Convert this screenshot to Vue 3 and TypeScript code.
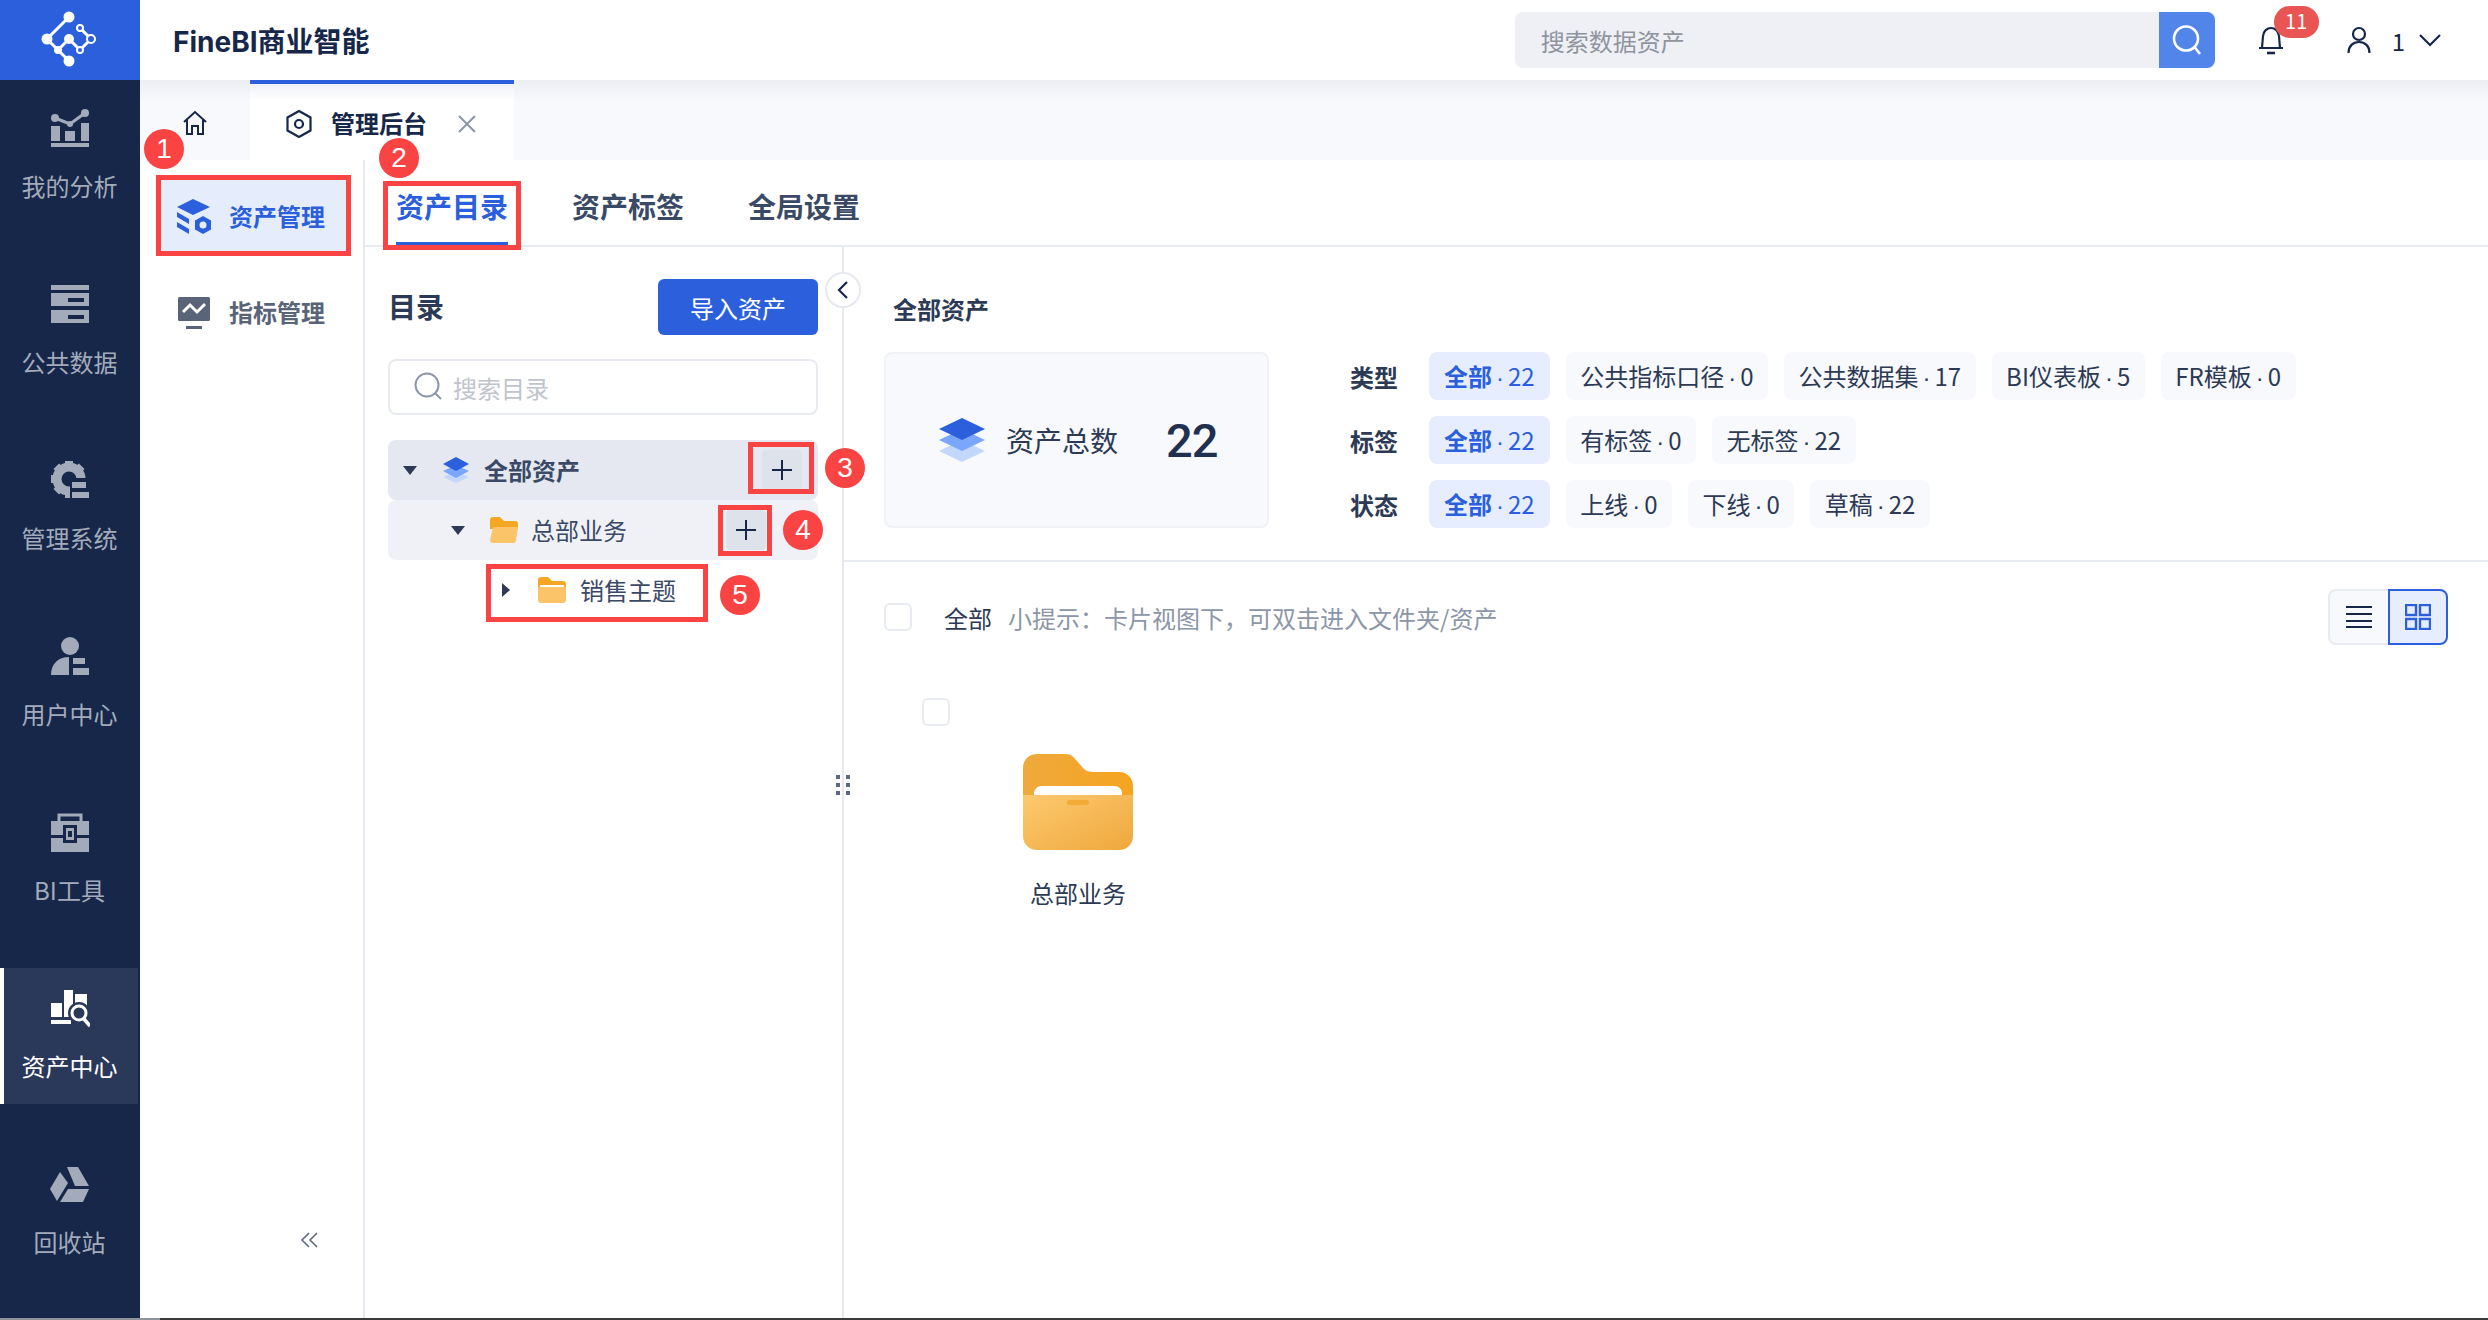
<script setup lang="ts">
interface Chip { text: string; count: string; active?: boolean }
interface FilterRow { label: string; chips: Chip[] }

const navItems = [
  { key: 'analysis', label: '我的分析' },
  { key: 'data', label: '公共数据' },
  { key: 'system', label: '管理系统' },
  { key: 'user', label: '用户中心' },
  { key: 'tools', label: 'BI工具' },
  { key: 'asset', label: '资产中心', active: true },
  { key: 'trash', label: '回收站' },
]

const filters: FilterRow[] = [
  { label: '类型', chips: [
    { text: '全部', count: '22', active: true },
    { text: '公共指标口径', count: '0' },
    { text: '公共数据集', count: '17' },
    { text: 'BI仪表板', count: '5' },
    { text: 'FR模板', count: '0' },
  ] },
  { label: '标签', chips: [
    { text: '全部', count: '22', active: true },
    { text: '有标签', count: '0' },
    { text: '无标签', count: '22' },
  ] },
  { label: '状态', chips: [
    { text: '全部', count: '22', active: true },
    { text: '上线', count: '0' },
    { text: '下线', count: '0' },
    { text: '草稿', count: '22' },
  ] },
]

const marks = [1, 2, 3, 4, 5]
</script>

<template>
  <div class="root">
    <aside class="rail">
      <div class="logo">
        <svg width="80" height="80" viewBox="30 0 80 80" fill="none">
          <path d="M69 17L47 39L58 50L69 61M58 50L69 39L80 50L91 39L80 28" stroke="#fff" stroke-width="3" />
          <circle cx="69" cy="17" r="5.5" fill="#fff" />
          <circle cx="47" cy="39" r="5.5" fill="#fff" />
          <circle cx="69" cy="39" r="5" fill="#fff" />
          <circle cx="58" cy="50" r="4" fill="#fff" />
          <circle cx="69" cy="61" r="5.5" fill="#fff" />
          <circle cx="80" cy="28" r="3" fill="#2c5fdc" stroke="#fff" stroke-width="2" />
          <circle cx="91" cy="39" r="4" fill="#2c5fdc" stroke="#fff" stroke-width="2" />
          <circle cx="80" cy="50" r="3" fill="#2c5fdc" stroke="#fff" stroke-width="2" />
        </svg>
      </div>
      <nav class="rail-nav">
        <div v-for="n in navItems" :key="n.key" class="rail-item" :class="{ on: n.active }">
          <svg class="rail-icon" width="40" height="40" viewBox="0 0 40 40">
            <template v-if="n.key === 'analysis'">
              <path d="M5 10L20 16L35 5" fill="none" stroke="currentColor" stroke-width="3" />
              <circle cx="5" cy="10" r="4" fill="currentColor" />
              <circle cx="20" cy="16" r="3" fill="currentColor" />
              <circle cx="35" cy="5" r="4" fill="currentColor" />
              <rect x="1" y="18" width="9" height="15" fill="currentColor" />
              <rect x="15" y="23" width="10" height="10" fill="currentColor" />
              <rect x="31" y="15" width="8" height="18" fill="currentColor" />
              <rect x="1" y="35" width="38" height="4" fill="currentColor" />
            </template>
            <template v-else-if="n.key === 'data'">
              <rect x="1" y="1" width="38" height="5" fill="currentColor" />
              <path d="M1 9H39V22H1ZM18 14V18H34V14Z" fill="currentColor" fill-rule="evenodd" />
              <path d="M1 26H39V39H1ZM18 31V35H34V31Z" fill="currentColor" fill-rule="evenodd" />
            </template>
            <template v-else-if="n.key === 'system'">
              <circle cx="19" cy="19" r="12" fill="none" stroke="currentColor" stroke-width="9" />
              <g fill="currentColor">
                <rect x="15" y="1" width="8" height="6" />
                <rect x="15" y="31" width="8" height="7" />
                <rect x="1" y="15" width="6" height="8" />
                <rect x="15" y="1" width="8" height="6" transform="rotate(45 19 19)" />
                <rect x="15" y="1" width="8" height="6" transform="rotate(-45 19 19)" />
                <rect x="15" y="1" width="8" height="6" transform="rotate(-135 19 19)" />
                <rect x="15" y="1" width="8" height="6" transform="rotate(135 19 19)" />
              </g>
              <rect x="20" y="18" width="20" height="22" fill="#16274a" />
              <rect x="22" y="22" width="14" height="6" fill="currentColor" />
              <rect x="22" y="32" width="17" height="6" fill="currentColor" />
            </template>
            <template v-else-if="n.key === 'user'">
              <circle cx="20" cy="10" r="9" fill="currentColor" />
              <path d="M1 39C1 28 8 21 19 21V39Z" fill="currentColor" />
              <rect x="23" y="22" width="12" height="6" fill="currentColor" />
              <rect x="23" y="32" width="16" height="7" fill="currentColor" />
            </template>
            <template v-else-if="n.key === 'tools'">
              <path d="M9 9V3H31V9" fill="none" stroke="currentColor" stroke-width="3" />
              <rect x="1" y="9" width="38" height="14" fill="currentColor" />
              <rect x="1" y="26" width="38" height="14" fill="currentColor" />
              <rect x="13" y="13" width="14" height="18" fill="#16274a" />
              <rect x="16" y="16" width="8" height="12" fill="currentColor" />
              <rect x="18" y="19" width="4" height="6" fill="#16274a" />
            </template>
            <template v-else-if="n.key === 'asset'">
              <rect x="1" y="15" width="11" height="14" fill="currentColor" />
              <rect x="14" y="2" width="9" height="27" fill="currentColor" />
              <rect x="25" y="6" width="12" height="14" fill="currentColor" />
              <rect x="1" y="32" width="20" height="4" fill="currentColor" />
              <circle cx="29" cy="25" r="8" fill="none" stroke="#2a3859" stroke-width="6" />
              <circle cx="29" cy="25" r="7" fill="#2a3859" stroke="currentColor" stroke-width="3" />
              <path d="M34 31L40 38" stroke="currentColor" stroke-width="3.5" />
            </template>
            <template v-else>
              <path d="M17 3H28L39 22H25Z" fill="currentColor" />
              <path d="M0 25L10 8L18 19L7 37Z" fill="currentColor" />
              <path d="M10 38L18 25H39L33 38Z" fill="currentColor" />
            </template>
          </svg>
          <span class="rail-label">{{ n.label }}</span>
        </div>
      </nav>
    </aside>

    <div class="main">
      <header class="topbar">
        <div class="brand">FineBI商业智能</div>
        <div class="top-search">
          <span class="top-search-text">搜索数据资产</span>
          <span class="top-search-btn">
            <svg width="32" height="32" viewBox="0 0 32 32" fill="none" stroke="#fff" stroke-width="2.6">
              <circle cx="15" cy="14.5" r="12" />
              <path d="M23.5 23L29 30" />
            </svg>
          </span>
        </div>
        <div class="bell">
          <svg width="28" height="30" viewBox="0 0 28 30" fill="none" stroke="#16274a" stroke-width="2.2">
            <path d="M2 23H26M5 23L6 11C6.5 6 10 3 14 3S21.5 6 22 11L23 23" />
            <path d="M10 28H18" stroke-width="2.6" />
          </svg>
          <span class="badge">11</span>
        </div>
        <div class="user">
          <svg width="24" height="28" viewBox="0 0 24 28" fill="none" stroke="#16274a" stroke-width="2.2">
            <circle cx="12" cy="8" r="6" />
            <path d="M1.5 27C1.5 20 6 16 12 16S22.5 20 22.5 27" />
          </svg>
          <span class="user-name">1</span>
          <svg width="24" height="14" viewBox="0 0 24 14" fill="none" stroke="#16274a" stroke-width="2.2">
            <path d="M2 2L12 12L22 2" />
          </svg>
        </div>
      </header>

      <div class="tabbar">
        <div class="home-tab">
          <svg width="26" height="26" viewBox="0 0 26 26" fill="none" stroke="#16274a" stroke-width="2">
            <path d="M2 12L13 2L24 12M5 10V24H10V16H16V24H21V10" />
          </svg>
        </div>
        <div class="page-tab">
          <svg width="26" height="30" viewBox="0 0 26 30" fill="none" stroke="#16274a" stroke-width="2.2">
            <path d="M13 2L24.5 8.5V21.5L13 28L1.5 21.5V8.5Z" />
            <circle cx="13" cy="15" r="4" />
          </svg>
          <span class="page-tab-text">管理后台</span>
          <svg class="page-tab-close" width="20" height="20" viewBox="0 0 20 20" fill="none" stroke="#8c96a8" stroke-width="2">
            <path d="M2 2L18 18M18 2L2 18" />
          </svg>
        </div>
      </div>

      <div class="workspace">
        <aside class="subnav">
          <div class="sub-item on">
            <svg width="36" height="36" viewBox="0 0 36 36">
              <path d="M17 0L34 8L17 16L1 8Z" fill="#2c5fdc" />
              <path d="M1 13L13 20V25L1 18ZM1 23L13 30V35L1 28Z" fill="#2c5fdc" />
              <path d="M27 17L35 21.5V30.5L27 35L19 30.5V21.5Z" fill="#2c5fdc" />
              <circle cx="27" cy="26" r="3.5" fill="#e5edfd" />
            </svg>
            <span>资产管理</span>
          </div>
          <div class="sub-item">
            <svg width="36" height="36" viewBox="0 0 36 36">
              <rect x="2" y="2" width="32" height="24" rx="1.5" fill="#5a6478" />
              <path d="M7 17L14 10L21 17L29 9" fill="none" stroke="#fff" stroke-width="3" />
              <rect x="10" y="31" width="16" height="3" fill="#5a6478" />
            </svg>
            <span>指标管理</span>
          </div>
          <div class="sub-collapse">
            <svg width="18" height="16" viewBox="0 0 18 16" fill="none" stroke="#5d6b82" stroke-width="1.6">
              <path d="M9 1L2 8L9 15M17 1L10 8L17 15" />
            </svg>
          </div>
        </aside>

        <section class="content">
          <div class="tabs">
            <div class="tab on">资产目录</div>
            <div class="tab">资产标签</div>
            <div class="tab">全局设置</div>
          </div>

          <div class="panes">
            <div class="tree-pane">
              <div class="collapse-btn">
                <svg width="14" height="20" viewBox="0 0 14 20" fill="none" stroke="#16274a" stroke-width="2.2">
                  <path d="M11 2L3 10L11 18" />
                </svg>
              </div>
              <div class="drag-handle"><i /><i /><i /><i /><i /><i /></div>

              <div class="tree-head">
                <span class="tree-title">目录</span>
                <button class="import-btn">导入资产</button>
              </div>
              <div class="tree-search">
                <svg width="30" height="30" viewBox="0 0 30 30" fill="none" stroke="#8c96a8" stroke-width="2">
                  <circle cx="13" cy="13" r="11.5" />
                  <path d="M21.5 21.5L27 27" />
                </svg>
                <span>搜索目录</span>
              </div>

              <div class="tree">
                <div class="tree-row lvl0">
                  <span class="caret down" />
                  <svg width="26" height="26" viewBox="0 0 26 26">
                    <path d="M13 15L26 20L13 26L0 20Z" fill="#c3d7fd" />
                    <path d="M13 8L26 14L13 21L0 14Z" fill="#7aa6fb" />
                    <path d="M13 0L26 7L13 14L0 7Z" fill="#2c5fdc" />
                  </svg>
                  <span class="tree-text strong">全部资产</span>
                  <span class="tree-add">
                    <svg width="22" height="22" viewBox="0 0 22 22" stroke="#16274a" stroke-width="2"><path d="M11 1V21M1 11H21" /></svg>
                  </span>
                </div>
                <div class="tree-row lvl1">
                  <span class="caret down" />
                  <svg width="28" height="26" viewBox="0 0 28 26">
                    <path d="M0 3C0 1 1 0 3 0H10L14 4H25C27 4 28 5 28 7V12H0Z" fill="#f5a623" />
                    <path d="M3 10H28L26 23C26 25 25 26 23 26H3C1 26 0 25 0 23Z" fill="#fbc468" />
                  </svg>
                  <span class="tree-text">总部业务</span>
                  <span class="tree-add">
                    <svg width="22" height="22" viewBox="0 0 22 22" stroke="#16274a" stroke-width="2"><path d="M11 1V21M1 11H21" /></svg>
                  </span>
                </div>
                <div class="tree-row lvl2">
                  <span class="caret right" />
                  <svg width="28" height="26" viewBox="0 0 28 26">
                    <path d="M0 3C0 1 1 0 3 0H10L14 4H25C27 4 28 5 28 7V12H0Z" fill="#f5a623" />
                    <rect x="2" y="8" width="24" height="3" fill="#fff" />
                    <path d="M0 10H28V23C28 25 27 26 25 26H3C1 26 0 25 0 23Z" fill="#fbc468" />
                  </svg>
                  <span class="tree-text">销售主题</span>
                </div>
              </div>
            </div>

            <div class="detail">
              <div class="detail-top">
                <div class="detail-title">全部资产</div>
                <div class="summary">
                  <div class="total-card">
                    <svg width="46" height="44" viewBox="0 0 46 44">
                      <path d="M23 22L46 33L23 44L0 33Z" fill="#c3d7fd" />
                      <path d="M23 11L46 22L23 33L0 22Z" fill="#7aa6fb" />
                      <path d="M23 0L46 11L23 22L0 11Z" fill="#2c5fdc" />
                    </svg>
                    <span class="total-label">资产总数</span>
                    <span class="total-num">22</span>
                  </div>
                  <div class="filters">
                    <div v-for="row in filters" :key="row.label" class="filter-row">
                      <span class="filter-label">{{ row.label }}</span>
                      <span v-for="c in row.chips" :key="c.text" class="chip" :class="{ on: c.active }">
                        <b v-if="c.active">{{ c.text }}</b><template v-else>{{ c.text }}</template><span class="dot">·</span>{{ c.count }}
                      </span>
                    </div>
                  </div>
                </div>
              </div>

              <div class="toolbar">
                <span class="check" />
                <span class="all-text">全部</span>
                <span class="hint">小提示：卡片视图下，可双击进入文件夹/资产</span>
                <div class="view-toggle">
                  <span class="view-btn">
                    <svg width="26" height="22" viewBox="0 0 26 22" stroke="#16274a" stroke-width="2"><path d="M0 1H26M0 8H26M0 15H26M0 21H26" /></svg>
                  </span>
                  <span class="view-btn on">
                    <svg width="26" height="26" viewBox="0 0 26 26" fill="none" stroke="#2c5fdc" stroke-width="2.4">
                      <rect x="1" y="1" width="10" height="10" />
                      <rect x="15" y="1" width="10" height="10" />
                      <rect x="1" y="15" width="10" height="10" />
                      <rect x="15" y="15" width="10" height="10" />
                    </svg>
                  </span>
                </div>
              </div>

              <div class="asset-card">
                <span class="check" />
                <svg class="asset-folder" width="110" height="96" viewBox="0 0 110 96">
                  <defs>
                    <linearGradient id="bigBack" x1="0" y1="0" x2="1" y2="0">
                      <stop offset="0" stop-color="#efa93d" />
                      <stop offset="1" stop-color="#f6a41f" />
                    </linearGradient>
                    <linearGradient id="bigFront" x1="0" y1="0" x2="1" y2="1">
                      <stop offset="0" stop-color="#fdc96f" />
                      <stop offset="1" stop-color="#efa83c" />
                    </linearGradient>
                  </defs>
                  <path d="M0 14C0 6 6 0 14 0H42C47 0 50 2 53 6L60 14C63 17 66 18 70 18H96C104 18 110 24 110 32V50H0Z" fill="url(#bigBack)" />
                  <path d="M11 40C11 35 14 32 19 32H91C96 32 99 35 99 40V50H11Z" fill="#fff" />
                  <path d="M0 41H110V82C110 90 104 96 96 96H14C6 96 0 90 0 82Z" fill="url(#bigFront)" />
                  <rect x="44" y="46" width="22" height="5" rx="2.5" fill="#f3ab36" />
                </svg>
                <span class="asset-name">总部业务</span>
              </div>
            </div>
          </div>
        </section>
      </div>
    </div>

    <div class="red-box box1" />
    <div class="red-box box2" />
    <div class="red-box box3" />
    <div class="red-box box4" />
    <div class="red-box box5" />
    <span v-for="m in marks" :key="m" class="mark" :class="'mark' + m">{{ m }}</span>
    <div class="bottom-line" />
  </div>
</template>

<style scoped>
* {
  box-sizing: border-box;
}

.root {
  position: relative;
  display: flex;
  width: 100vw;
  height: 100vh;
  overflow: hidden;
  background: #fff;
  color: #2c3a55;
  font-family: "Noto Sans CJK SC", "Noto Sans", sans-serif;
  font-size: 24px;
}

.rail {
  flex: 0 0 140px;
  background: #16274a;
  display: flex;
  flex-direction: column;
}

.logo {
  height: 80px;
  background: #2c5fdc;
  flex: none;
}

.logo svg {
  display: block;
  margin-left: 30px;
}

.rail-nav {
  display: flex;
  flex-direction: column;
  gap: 40px;
  padding-top: 8px;
}

.rail-item {
  height: 136px;
  width: 138px;
  padding-top: 20px;
  display: flex;
  flex-direction: column;
  align-items: center;
  color: #a3abba;
}

.rail-item.on {
  background: #2a3859;
  border-left: 4px solid #fff;
  color: #fff;
}

.rail-item .rail-icon {
  margin-left: 2px;
}

.rail-item.on .rail-icon {
  margin-left: -2px;
}

.rail-label {
  margin-top: 22px;
  margin-left: 1px;
  line-height: 32px;
  font-size: 24px;
  white-space: nowrap;
}

.rail-item.on .rail-label {
  margin-left: -3px;
}

.main {
  flex: 1;
  min-width: 0;
  display: flex;
  flex-direction: column;
}

.topbar {
  position: relative;
  z-index: 2;
  flex: 0 0 80px;
  display: flex;
  align-items: center;
  padding-left: 33px;
  background: #fff;
}

.brand {
  font-size: 28px;
  font-weight: 700;
  color: #16274a;
  font-family: "Inter", "Noto Sans CJK SC", sans-serif;
  letter-spacing: 0;
}

.top-search {
  margin-left: auto;
  width: 700px;
  height: 56px;
  display: flex;
  align-items: center;
  justify-content: space-between;
  background: #eef0f5;
  border-radius: 8px;
  overflow: hidden;
  padding-left: 26px;
}

.top-search-text {
  color: #8f949e;
}

.top-search-btn {
  width: 56px;
  height: 56px;
  background: #5285ea;
  display: flex;
  align-items: center;
  justify-content: center;
}

.bell {
  position: relative;
  margin-left: 42px;
  width: 28px;
  height: 30px;
}

.bell svg {
  display: block;
}

.badge {
  position: absolute;
  left: 17px;
  top: -19px;
  width: 45px;
  height: 32px;
  border-radius: 16px;
  background: #e85552;
  color: #fff;
  font-size: 20px;
  line-height: 30px;
  text-align: center;
}

.user {
  display: flex;
  align-items: center;
  margin-left: 62px;
  margin-right: 46px;
}

.user-name {
  margin-left: 21px;
  margin-right: 13px;
  color: #16274a;
}

.tabbar {
  flex: 0 0 80px;
  display: flex;
  background: linear-gradient(#eceef4, #f8f9fd 22px);
}

.home-tab {
  width: 110px;
  display: flex;
  justify-content: center;
  padding-top: 30px;
}

.home-tab svg {
  display: block;
}

.page-tab {
  width: 264px;
  border-top: 4px solid #2c5fdc;
  background: linear-gradient(#eef1f8, #fff 16px);
  display: flex;
  align-items: center;
  padding-left: 36px;
  padding-top: 3px;
}

.page-tab-text {
  margin-left: 19px;
  font-weight: 700;
  color: #16274a;
  padding-bottom: 2px;
}

.page-tab-close {
  margin-left: 30px;
}

.workspace {
  flex: 1;
  min-height: 0;
  display: flex;
}

.subnav {
  flex: 0 0 225px;
  border-right: 2px solid #e6e9f0;
  padding: 19px 16px 0;
  display: flex;
  flex-direction: column;
  gap: 20px;
  position: relative;
}

.sub-item {
  height: 76px;
  display: flex;
  align-items: center;
  padding-left: 20px;
  gap: 17px;
  font-weight: 700;
  color: #5a6478;
  border-radius: 6px;
}

.sub-item span {
  padding-bottom: 3px;
}

.sub-item.on {
  background: #e5edfd;
  color: #2c5fdc;
}

.sub-collapse {
  margin-top: auto;
  margin-bottom: 72px;
  align-self: flex-end;
  margin-right: 29px;
}

.sub-collapse svg {
  display: block;
}

.content {
  flex: 1;
  min-width: 0;
  display: flex;
  flex-direction: column;
}

.tabs {
  flex: 0 0 87px;
  display: flex;
  gap: 64px;
  padding-left: 31px;
  border-bottom: 2px solid #e8ebf1;
}

.tab {
  height: 85px;
  padding-top: 26px;
  line-height: 40px;
  font-size: 28px;
  font-weight: 700;
  color: #3a4a66;
}

.tab.on {
  color: #2c5fdc;
  border-bottom: 3px solid #2c5fdc;
}

.panes {
  flex: 1;
  min-height: 0;
  display: flex;
}

.tree-pane {
  position: relative;
  flex: 0 0 479px;
  border-right: 2px solid #e6e9f0;
  padding: 32px 24px 0 23px;
}

.collapse-btn {
  position: absolute;
  right: -19px;
  top: 25px;
  width: 36px;
  height: 36px;
  border: 2px solid #e6e9f0;
  border-radius: 50%;
  background: #fff;
  display: flex;
  align-items: center;
  justify-content: center;
}

.drag-handle {
  position: absolute;
  right: -8px;
  top: 528px;
  width: 14px;
  height: 20px;
  display: grid;
  grid-template-columns: 4px 4px;
  grid-auto-rows: 4px;
  justify-content: space-between;
  align-content: space-between;
}

.drag-handle i {
  background: #5a6880;
}

.tree-head {
  height: 56px;
  display: flex;
  align-items: center;
  justify-content: space-between;
}

.tree-title {
  font-size: 28px;
  font-weight: 700;
  color: #2c3a55;
  padding-bottom: 2px;
}

.import-btn {
  width: 160px;
  height: 56px;
  border: 0;
  border-radius: 6px;
  background: #2c5fdc;
  color: #fff;
  font: inherit;
  padding: 0;
}

.tree-search {
  margin-top: 24px;
  height: 56px;
  border: 2px solid #e8ebf1;
  border-radius: 8px;
  display: flex;
  align-items: center;
  padding-left: 24px;
  gap: 9px;
  color: #c0c4cc;
}

.tree {
  margin-top: 25px;
  display: flex;
  flex-direction: column;
}

.tree-row {
  height: 60px;
  display: flex;
  align-items: center;
  border-radius: 8px;
}

.lvl0 {
  background: #e5e8f0;
  padding-left: 15px;
}

.lvl1 {
  background: #eff1f6;
  padding-left: 63px;
}

.lvl2 {
  padding-left: 114px;
}

.caret {
  display: block;
  width: 0;
  height: 0;
  border-style: solid;
}

.caret.down {
  border-width: 9px 7px 0;
  border-color: #2c3a55 transparent transparent;
  margin-right: 25px;
}

.caret.right {
  border-width: 7px 0 7px 8px;
  border-color: transparent transparent transparent #2c3a55;
  margin-right: 28px;
}

.lvl0 .caret {
  margin-right: 26px;
}

.tree-text {
  margin-left: 14px;
  color: #3a4a66;
  padding-bottom: 1px;
}

.lvl1 .tree-text {
  margin-left: 13px;
}

.tree-text.strong {
  margin-left: 15px;
  font-weight: 700;
}

.tree-add {
  width: 40px;
  height: 40px;
  border-radius: 4px;
  background: #dee2ea;
  display: flex;
  align-items: center;
  justify-content: center;
  margin-left: auto;
}

.lvl0 .tree-add {
  margin-right: 16px;
}

.lvl1 .tree-add {
  margin-right: 52px;
}

.detail {
  flex: 1;
  min-width: 0;
  display: flex;
  flex-direction: column;
}

.detail-top {
  padding: 46px 0 32px 40px;
  border-bottom: 2px solid #e8ebf1;
}

.detail-title {
  margin-left: 9px;
  line-height: 32px;
  font-weight: 700;
  color: #2c3a55;
}

.summary {
  margin-top: 27px;
  display: flex;
  gap: 81px;
}

.total-card {
  width: 385px;
  height: 176px;
  background: #f8f9fd;
  border: 2px solid #f0f2f6;
  border-radius: 8px;
  display: flex;
  align-items: center;
  padding-left: 53px;
}

.total-label {
  margin-left: 21px;
  font-size: 28px;
}

.total-num {
  margin-left: 48px;
  font-family: "Roboto", sans-serif;
  font-size: 47px;
  font-weight: 500;
  color: #1f3050;
  line-height: 1;
  letter-spacing: -1px;
}

.filters {
  display: flex;
  flex-direction: column;
  gap: 16px;
}

.filter-row {
  display: flex;
  align-items: center;
  gap: 16px;
  height: 48px;
}

.filter-label {
  width: 63px;
  font-weight: 700;
}

.chip {
  height: 48px;
  line-height: 48px;
  padding: 0 14.5px;
  background: #f8f9fd;
  border-radius: 8px;
  white-space: nowrap;
}

.chip.on {
  background: #e5edfe;
  color: #2c5fdc;
  padding: 0 15px;
}

.dot {
  display: inline-block;
  width: 16px;
  text-align: center;
  font-family: "Liberation Sans", sans-serif;
}

.toolbar {
  height: 83px;
  padding: 27px 40px 0 40px;
  display: flex;
  align-items: center;
  flex: none;
}

.check {
  display: block;
  flex: none;
  width: 28px;
  height: 28px;
  border: 2px solid #e8ebf1;
  border-radius: 6px;
}

.all-text {
  margin-left: 32px;
}

.hint {
  margin-left: 16px;
  color: #8c96a8;
}

.view-toggle {
  margin-left: auto;
  display: flex;
  height: 56px;
}

.view-btn {
  width: 60px;
  display: flex;
  align-items: center;
  justify-content: center;
  background: #f8f9fd;
  border: 2px solid #e8ebf1;
  border-right: 0;
  border-radius: 8px 0 0 8px;
}

.view-btn.on {
  width: 60px;
  background: #e5edfe;
  border: 2px solid #2c5fdc;
  border-radius: 0 8px 8px 0;
}

.asset-card {
  margin: 53px 0 0 78px;
  width: 312px;
  display: flex;
  flex-direction: column;
  align-items: center;
}

.asset-card .check {
  align-self: flex-start;
}

.asset-folder {
  display: block;
  margin-top: 28px;
}

.asset-name {
  margin-top: 26px;
  line-height: 34px;
}

.red-box {
  position: absolute;
  border: 5px solid #fa4343;
}

.box1 { left: 156px; top: 175px; width: 195px; height: 81px; }
.box2 { left: 383px; top: 181px; width: 138px; height: 69px; }
.box3 { left: 748px; top: 442px; width: 66px; height: 52px; }
.box4 { left: 718px; top: 505px; width: 54px; height: 51px; }
.box5 { left: 486px; top: 564px; width: 222px; height: 58px; }

.mark {
  position: absolute;
  width: 40px;
  height: 40px;
  border-radius: 50%;
  background: #fa4343;
  color: #fff;
  font-family: "Liberation Sans", sans-serif;
  font-size: 28px;
  line-height: 40px;
  text-align: center;
}

.mark1 { left: 144px; top: 129px; }
.mark2 { left: 379px; top: 138px; }
.mark3 { left: 825px; top: 448px; }
.mark4 { left: 783px; top: 510px; }
.mark5 { left: 720px; top: 575px; }

.bottom-line {
  position: absolute;
  left: 0;
  right: 0;
  bottom: 0;
  height: 2px;
  background: linear-gradient(to right, #8f939c 160px, #3a3a3a 160px);
}
</style>
